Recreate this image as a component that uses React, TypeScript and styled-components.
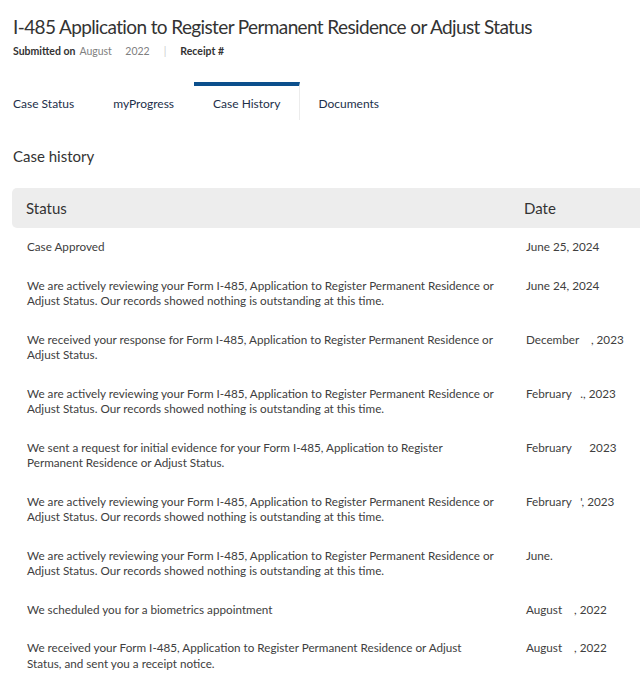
import React from "react";
import styled, { createGlobalStyle } from "styled-components";

interface HistoryItem {
  status: string;
  date: string;
}

const history: HistoryItem[] = [
  { status: "Case Approved", date: "June 25, 2024" },
  {
    status:
      "We are actively reviewing your Form I-485, Application to Register Permanent Residence or Adjust Status. Our records showed nothing is outstanding at this time.",
    date: "June 24, 2024",
  },
  {
    status:
      "We received your response for Form I-485, Application to Register Permanent Residence or Adjust Status.",
    date: "December \u00a0\u00a0\u00a0, 2023",
  },
  {
    status:
      "We are actively reviewing your Form I-485, Application to Register Permanent Residence or Adjust Status. Our records showed nothing is outstanding at this time.",
    date: "February \u00a0\u00a0., 2023",
  },
  {
    status:
      "We sent a request for initial evidence for your Form I-485, Application to Register Permanent Residence or Adjust Status.",
    date: "February \u00a0\u00a0\u00a0\u00a0 2023",
  },
  {
    status:
      "We are actively reviewing your Form I-485, Application to Register Permanent Residence or Adjust Status. Our records showed nothing is outstanding at this time.",
    date: "February \u00a0\u00a0', 2023",
  },
  {
    status:
      "We are actively reviewing your Form I-485, Application to Register Permanent Residence or Adjust Status. Our records showed nothing is outstanding at this time.",
    date: "June.",
  },
  { status: "We scheduled you for a biometrics appointment", date: "August \u00a0\u00a0\u00a0, 2022" },
  {
    status:
      "We received your Form I-485, Application to Register Permanent Residence or Adjust Status, and sent you a receipt notice.",
    date: "August \u00a0\u00a0\u00a0, 2022",
  },
];

const tabs = ["Case Status", "myProgress", "Case History", "Documents"];

/**
 * 케이스 히스토리 화면
 */
export default function App(): JSX.Element {
  return (
    <>
      <GlobalStyle />
      <Page>
        <Title>I-485 Application to Register Permanent Residence or Adjust Status</Title>
        <Meta>
          <strong>Submitted on</strong>
          <span className="light">August &nbsp;&nbsp;&nbsp; 2022</span>
          <span className="divider">|</span>
          <strong>Receipt #</strong>
        </Meta>

        <TabBar>
          {tabs.map((tab) => (
            <Tab key={tab} $active={tab === "Case History"}>
              {tab}
            </Tab>
          ))}
        </TabBar>

        <SectionTitle>Case history</SectionTitle>

        <Table>
          <HeaderRow>
            <span>Status</span>
            <span>Date</span>
          </HeaderRow>
          {history.map((item, i) => (
            <Row key={i}>
              <span className="status">{item.status}</span>
              <span className="date">{item.date}</span>
            </Row>
          ))}
        </Table>
      </Page>
    </>
  );
}

const GlobalStyle = createGlobalStyle`
  body {
    margin: 0;
    background: #ffffff;
    font-family: "Lato", "Open Sans", sans-serif;
    color: #333333;
  }
`;

const Page = styled.main`
  display: flex;
  flex-direction: column;
  padding: 14px 0 0 13px;
  overflow: hidden;
`;

const Title = styled.h1`
  margin: 0;
  font-size: 19px;
  font-weight: 400;
  line-height: 26px;
  color: #333333;
  letter-spacing: -0.62px;
  white-space: nowrap;
`;

const Meta = styled.div`
  display: flex;
  align-items: center;
  gap: 4px;
  margin-top: 4px;
  font-size: 10.5px;
  line-height: 14px;
  color: #333333;

  strong {
    font-weight: 700;
  }

  .light {
    color: #808080;
  }

  .divider {
    color: #cccccc;
    margin: 0 10px;
  }
`;

const TabBar = styled.nav`
  display: flex;
  margin-top: 24px;
  margin-left: -19px;
`;

const Tab = styled.div<{ $active?: boolean }>`
  display: flex;
  align-items: center;
  height: 34px;
  padding: 0 19px;
  font-size: 12px;
  color: #1d2f4a;
  border-top: 4px solid ${(props) => (props.$active ? "#0b4f8c" : "transparent")};
  border-right: 1px solid ${(props) => (props.$active ? "#ececec" : "transparent")};
  margin-right: ${(props) => (props.$active ? -1 : 0)}px;
`;

const SectionTitle = styled.h2`
  margin: 26px 0 0;
  font-size: 15px;
  font-weight: 400;
  line-height: 20px;
  color: #333333;
`;

const Table = styled.section`
  display: flex;
  flex-direction: column;
  margin-top: 22px;
  margin-left: -1px;
`;

const HeaderRow = styled.div`
  display: grid;
  grid-template-columns: 498px 1fr;
  align-items: center;
  height: 40px;
  padding-left: 14px;
  background: #ededed;
  border-radius: 5px 0 0 5px;
  font-size: 15px;
  color: #333333;
`;

const Row = styled.div`
  display: grid;
  grid-template-columns: 469px 1fr;
  column-gap: 29px;
  padding: 11px 0 12px 15px;
  font-size: 11.7px;
  line-height: 15.5px;
  color: #404040;

  .date {
    white-space: pre;
    padding-left: 1px;
  }
`;
